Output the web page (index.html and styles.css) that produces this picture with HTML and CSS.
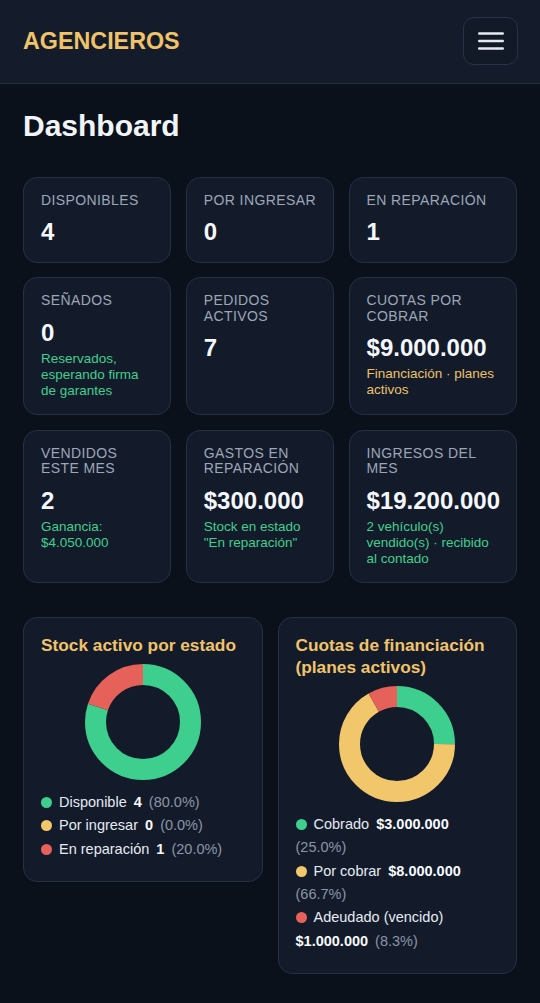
FILE: index.html
```html
<!DOCTYPE html>
<html lang="es">
<head>
<meta charset="utf-8">
<title>Agencieros · Dashboard</title>
<link rel="stylesheet" href="styles.css">
</head>
<body>
<header class="topbar">
  <div class="brand">AGENCIEROS</div>
  <button class="menu-btn" aria-label="Menú">
    <svg width="26" height="18" viewBox="0 0 26 18"><g stroke="#e5eaf2" stroke-width="2.4" stroke-linecap="round"><line x1="1.2" y1="1.5" x2="24.8" y2="1.5"/><line x1="1.2" y1="9" x2="24.8" y2="9"/><line x1="1.2" y1="16.5" x2="24.8" y2="16.5"/></g></svg>
  </button>
</header>
<main class="page">
  <h1 class="title">Dashboard</h1>
  <section class="stats">
    <div class="card"><div class="label">Disponibles</div><div class="value">4</div></div>
    <div class="card"><div class="label">Por ingresar</div><div class="value">0</div></div>
    <div class="card"><div class="label">En reparación</div><div class="value">1</div></div>
    <div class="card"><div class="label">Señados</div><div class="value">0</div><div class="sub green">Reservados, esperando firma de garantes</div></div>
    <div class="card"><div class="label">Pedidos activos</div><div class="value">7</div></div>
    <div class="card"><div class="label">Cuotas por cobrar</div><div class="value">$9.000.000</div><div class="sub yellow">Financiación · planes activos</div></div>
    <div class="card"><div class="label">Vendidos este mes</div><div class="value">2</div><div class="sub green">Ganancia: $4.050.000</div></div>
    <div class="card"><div class="label">Gastos en reparación</div><div class="value">$300.000</div><div class="sub green">Stock en estado "En reparación"</div></div>
    <div class="card"><div class="label">Ingresos del mes</div><div class="value">$19.200.000</div><div class="sub green">2 vehículo(s) vendido(s) · recibido al contado</div></div>
  </section>
  <section class="charts">
    <div class="chart-card">
      <h2 class="chart-title">Stock activo por estado</h2>
      <svg class="donut" width="116" height="116" viewBox="0 0 116 116">
        <g transform="rotate(-90 58 58)" fill="none" stroke-width="21">
          <circle cx="58" cy="58" r="47.5" stroke="#3ecf8e" stroke-dasharray="238.76 298.45" stroke-dashoffset="0"/>
          <circle cx="58" cy="58" r="47.5" stroke="#e5615a" stroke-dasharray="59.69 298.45" stroke-dashoffset="-238.76"/>
        </g>
      </svg>
      <div class="legend">
        <div class="item"><span class="dot d-green"></span><span class="lbl">Disponible</span> <b class="val">4</b> <span class="pct">(80.0%)</span></div>
        <div class="item"><span class="dot d-yellow"></span><span class="lbl">Por ingresar</span> <b class="val">0</b> <span class="pct">(0.0%)</span></div>
        <div class="item"><span class="dot d-red"></span><span class="lbl">En reparación</span> <b class="val">1</b> <span class="pct">(20.0%)</span></div>
      </div>
    </div>
    <div class="chart-card">
      <h2 class="chart-title">Cuotas de financiación (planes activos)</h2>
      <svg class="donut" width="116" height="116" viewBox="0 0 116 116">
        <g transform="rotate(-90 58 58)" fill="none" stroke-width="21">
          <circle cx="58" cy="58" r="47.5" stroke="#3ecf8e" stroke-dasharray="74.61 298.45" stroke-dashoffset="0"/>
          <circle cx="58" cy="58" r="47.5" stroke="#f2c76c" stroke-dasharray="199.06 298.45" stroke-dashoffset="-74.61"/>
          <circle cx="58" cy="58" r="47.5" stroke="#e5615a" stroke-dasharray="24.78 298.45" stroke-dashoffset="-273.67"/>
        </g>
      </svg>
      <div class="legend">
        <div class="item"><span class="dot d-green"></span><span class="lbl">Cobrado</span> <b class="val">$3.000.000</b> <span class="pct">(25.0%)</span></div>
        <div class="item"><span class="dot d-yellow"></span><span class="lbl">Por cobrar</span> <b class="val">$8.000.000</b> <span class="pct">(66.7%)</span></div>
        <div class="item"><span class="dot d-red"></span><span class="lbl">Adeudado (vencido)</span> <b class="val">$1.000.000</b> <span class="pct">(8.3%)</span></div>
      </div>
    </div>
  </section>
</main>
</body>
</html>
```

FILE: styles.css
```css
* { box-sizing: border-box; }
html, body { margin: 0; padding: 0; }
body {
  background: #0b111b;
  color: #e5eaf2;
  font-family: "Liberation Sans", Arial, sans-serif;
  min-height: 1003px;
}
.topbar {
  display: flex;
  align-items: center;
  justify-content: space-between;
  padding: 17px 22px 18px 23px;
  background: #141c2b;
  border-bottom: 1px solid #222d3e;
}
.brand {
  color: #f0c36a;
  font-weight: 700;
  font-size: 23.3px;
  line-height: 28px;
}
.menu-btn {
  width: 55px;
  height: 48px;
  display: flex;
  align-items: center;
  justify-content: center;
  padding: 0;
  background: #121a28;
  border: 1px solid #263246;
  border-radius: 11px;
}
.menu-btn svg { display: block; }
.page {
  padding: 25px 23px 30px;
}
.title {
  margin: 0 0 34px;
  font-size: 30px;
  font-weight: 700;
  color: #f1f5f9;
  line-height: normal;
}
.stats {
  display: grid;
  grid-template-columns: repeat(3, 1fr);
  gap: 14.5px 15px;
}
.card {
  background: #131b2a;
  border: 1px solid #243044;
  border-radius: 14px;
  padding: 15px 16px 15.5px 17px;
}
.label {
  font-size: 14px;
  line-height: 1.1;
  letter-spacing: 0.4px;
  text-transform: uppercase;
  color: #9ca6b7;
}
.value {
  margin-top: 10px;
  font-size: 24px;
  font-weight: 700;
  color: #f4f7fb;
  line-height: normal;
}
.sub {
  margin-top: 4px;
  font-size: 13.5px;
  line-height: 16px;
}
.green { color: #3fcf8e; }
.yellow { color: #ebc26b; }
.charts {
  margin-top: 34px;
  display: grid;
  grid-template-columns: 1fr 1fr;
  gap: 15px;
  align-items: start;
}
.chart-card {
  background: #131b2a;
  border: 1px solid #243044;
  border-radius: 14px;
  padding: 15.5px 17px 20px;
}
.chart-title {
  margin: 0;
  font-size: 17.3px;
  line-height: 22px;
  font-weight: 700;
  color: #f0c36a;
}
.donut {
  display: block;
  margin: 8.5px auto 11px;
}
.legend {
  font-size: 14.5px;
  line-height: 23.3px;
  color: #e5eaf2;
}
.dot {
  display: inline-block;
  width: 11px;
  height: 11px;
  border-radius: 50%;
  margin-right: 7px;
  vertical-align: -1px;
}
.d-green { background: #3ecf8e; }
.d-yellow { background: #f2c76c; }
.d-red { background: #e5615a; }
.lbl { margin-right: 3px; }
.val { margin-right: 3px; color: #f8fafc; font-weight: 700; }
.pct { color: #8b95a7; }
```
